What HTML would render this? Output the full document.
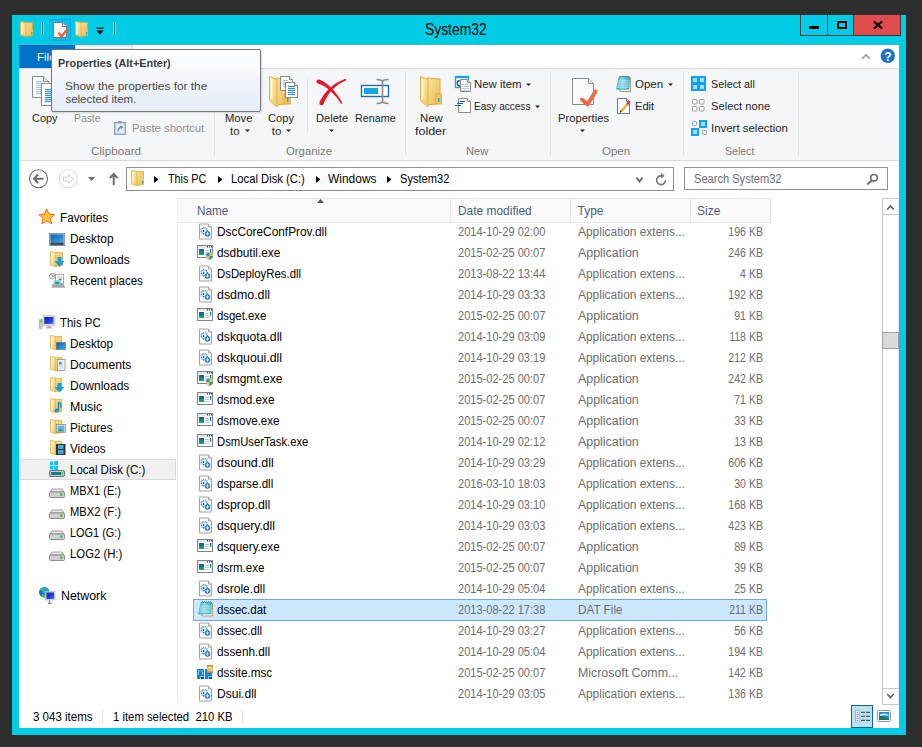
<!DOCTYPE html>
<html><head><meta charset="utf-8"><style>
html,body{margin:0;padding:0;width:922px;height:747px;overflow:hidden;background:#2e2e2e;font-family:"Liberation Sans", sans-serif;}
#root>div,#root>svg{position:absolute;}
.t{white-space:pre;}
</style></head><body><div id="root" style="position:relative;width:922px;height:747px;">
<div style="left:12px;top:15px;width:894px;height:720px;background:#01cce6;"></div>
<div style="left:19px;top:44px;width:880px;height:684px;background:#fff;"></div>
<div style="left:19px;top:44px;width:880px;height:1px;background:#4fb3c6;"></div>
<div style="left:800px;top:15px;width:101px;height:21px;background:#3a3a3a;"></div>
<div style="left:801px;top:15px;width:26px;height:20px;background:#01cce6;"></div>
<div style="left:828px;top:15px;width:25px;height:20px;background:#01cce6;"></div>
<div style="left:854px;top:15px;width:46px;height:20px;background:#e04b4b;"></div>
<div style="left:809px;top:26px;width:10px;height:3px;background:#000;"></div>
<div style="left:837px;top:21px;width:10px;height:8px;border:2px solid #000;box-sizing:border-box;"></div>
<svg style="left:873px;top:21px" width="10" height="8" viewBox="0 0 10 8"><path d="M1 0.5 L9 7.5 M9 0.5 L1 7.5" stroke="#000" stroke-width="2.2"/></svg>
<div class="t" style="left:424.6px;top:22.13px;font-size:15.8px;line-height:15.8px;color:#000;font-weight:400;transform-origin:left center;transform:scaleX(0.877);">System32</div>
<div style="left:19px;top:45px;width:56px;height:23px;background:#0072c6;"></div>
<div class="t" style="left:37px;top:52.27px;font-size:11.5px;line-height:11.5px;color:#fff;font-weight:400;transform-origin:left center;">File</div>
<div style="left:75px;top:45px;width:58px;height:24px;background:#f3f3f3;border:1px solid #dadbdc;border-bottom:none;box-sizing:border-box;"></div>
<div style="left:19px;top:68px;width:880px;height:1px;background:#dadbdc;"></div>
<div style="left:19px;top:69px;width:880px;height:91px;background:#f5f6f7;"></div>
<div style="left:19px;top:160px;width:880px;height:1px;background:#dadbdc;"></div>
<div style="left:214px;top:71px;width:1px;height:85px;background:#e2e3e4;"></div>
<div style="left:405px;top:71px;width:1px;height:85px;background:#e2e3e4;"></div>
<div style="left:550px;top:71px;width:1px;height:85px;background:#e2e3e4;"></div>
<div style="left:683px;top:71px;width:1px;height:85px;background:#e2e3e4;"></div>
<div style="left:798px;top:71px;width:1px;height:85px;background:#e2e3e4;"></div>
<div style="left:307px;top:78px;width:1px;height:55px;background:#e2e3e4;"></div>
<div class="t" style="left:32.4px;top:113.27px;font-size:11.5px;line-height:11.5px;color:#1e1e1e;font-weight:400;transform-origin:left center;transform:scaleX(0.953);">Copy</div>
<div class="t" style="left:74.2px;top:113.27px;font-size:11.5px;line-height:11.5px;color:#8d8d8d;font-weight:400;transform-origin:left center;transform:scaleX(0.901);">Paste</div>
<div class="t" style="left:131.5px;top:123.27px;font-size:11.5px;line-height:11.5px;color:#8d8d8d;font-weight:400;transform-origin:left center;transform:scaleX(0.982);">Paste shortcut</div>
<div class="t" style="left:91.4px;top:145.77px;font-size:11.5px;line-height:11.5px;color:#7a7a7a;font-weight:400;transform-origin:left center;transform:scaleX(1.018);">Clipboard</div>
<div class="t" style="left:225.2px;top:113.27px;font-size:11.5px;line-height:11.5px;color:#1e1e1e;font-weight:400;transform-origin:left center;transform:scaleX(0.978);">Move</div>
<div class="t" style="left:230px;top:126.27px;font-size:11.5px;line-height:11.5px;color:#1e1e1e;font-weight:400;transform-origin:left center;">to</div>
<div class="t" style="left:268.1px;top:113.27px;font-size:11.5px;line-height:11.5px;color:#1e1e1e;font-weight:400;transform-origin:left center;transform:scaleX(0.972);">Copy</div>
<div class="t" style="left:271.8px;top:126.27px;font-size:11.5px;line-height:11.5px;color:#1e1e1e;font-weight:400;transform-origin:left center;">to</div>
<div class="t" style="left:315.6px;top:113.27px;font-size:11.5px;line-height:11.5px;color:#1e1e1e;font-weight:400;transform-origin:left center;transform:scaleX(0.965);">Delete</div>
<div class="t" style="left:355.3px;top:113.27px;font-size:11.5px;line-height:11.5px;color:#1e1e1e;font-weight:400;transform-origin:left center;transform:scaleX(0.934);">Rename</div>
<div class="t" style="left:285.5px;top:145.77px;font-size:11.5px;line-height:11.5px;color:#7a7a7a;font-weight:400;transform-origin:left center;transform:scaleX(0.986);">Organize</div>
<div class="t" style="left:419.5px;top:113.27px;font-size:11.5px;line-height:11.5px;color:#1e1e1e;font-weight:400;transform-origin:left center;transform:scaleX(0.991);">New</div>
<div class="t" style="left:414.8px;top:126.27px;font-size:11.5px;line-height:11.5px;color:#1e1e1e;font-weight:400;transform-origin:left center;transform:scaleX(1.084);">folder</div>
<div class="t" style="left:474.4px;top:79.27px;font-size:11.5px;line-height:11.5px;color:#1e1e1e;font-weight:400;transform-origin:left center;transform:scaleX(0.991);">New item</div>
<div class="t" style="left:474.4px;top:101.27px;font-size:11.5px;line-height:11.5px;color:#1e1e1e;font-weight:400;transform-origin:left center;transform:scaleX(0.874);">Easy access</div>
<div class="t" style="left:465.5px;top:145.77px;font-size:11.5px;line-height:11.5px;color:#7a7a7a;font-weight:400;transform-origin:left center;transform:scaleX(0.973);">New</div>
<div class="t" style="left:557.6px;top:113.27px;font-size:11.5px;line-height:11.5px;color:#1e1e1e;font-weight:400;transform-origin:left center;transform:scaleX(0.973);">Properties</div>
<div class="t" style="left:634.6px;top:79.27px;font-size:11.5px;line-height:11.5px;color:#1e1e1e;font-weight:400;transform-origin:left center;transform:scaleX(1.002);">Open</div>
<div class="t" style="left:634.6px;top:101.27px;font-size:11.5px;line-height:11.5px;color:#1e1e1e;font-weight:400;transform-origin:left center;transform:scaleX(0.963);">Edit</div>
<div class="t" style="left:601.6px;top:145.77px;font-size:11.5px;line-height:11.5px;color:#7a7a7a;font-weight:400;transform-origin:left center;transform:scaleX(1.002);">Open</div>
<div class="t" style="left:710.5px;top:79.27px;font-size:11.5px;line-height:11.5px;color:#1e1e1e;font-weight:400;transform-origin:left center;transform:scaleX(0.941);">Select all</div>
<div class="t" style="left:710.5px;top:101.27px;font-size:11.5px;line-height:11.5px;color:#1e1e1e;font-weight:400;transform-origin:left center;transform:scaleX(0.973);">Select none</div>
<div class="t" style="left:710.5px;top:123.27px;font-size:11.5px;line-height:11.5px;color:#1e1e1e;font-weight:400;transform-origin:left center;transform:scaleX(0.994);">Invert selection</div>
<div class="t" style="left:725.1px;top:145.77px;font-size:11.5px;line-height:11.5px;color:#7a7a7a;font-weight:400;transform-origin:left center;transform:scaleX(0.917);">Select</div>
<div style="left:126px;top:167px;width:548px;height:24px;border:1px solid #8e8f8f;box-sizing:border-box;background:#fff;"></div>
<div class="t" style="left:168px;top:172.84px;font-size:12px;line-height:12px;color:#000;font-weight:400;transform-origin:left center;transform:scaleX(0.897);">This PC</div>
<div class="t" style="left:230.5px;top:172.84px;font-size:12px;line-height:12px;color:#000;font-weight:400;transform-origin:left center;transform:scaleX(0.938);">Local Disk (C:)</div>
<div class="t" style="left:328.3px;top:172.84px;font-size:12px;line-height:12px;color:#000;font-weight:400;transform-origin:left center;transform:scaleX(0.996);">Windows</div>
<div class="t" style="left:400.2px;top:172.84px;font-size:12px;line-height:12px;color:#000;font-weight:400;transform-origin:left center;transform:scaleX(0.926);">System32</div>
<div style="left:684px;top:167px;width:204px;height:23px;border:1px solid #8e8f8f;box-sizing:border-box;background:#fff;"></div>
<div class="t" style="left:694.2px;top:172.84px;font-size:12px;line-height:12px;color:#6d6d6d;font-weight:400;transform-origin:left center;transform:scaleX(0.924);">Search System32</div>
<div style="left:177px;top:197px;width:1px;height:507px;background:#f0f0f0;"></div>
<div style="left:20px;top:459px;width:156px;height:21px;background:#f0f0f0;border:1px solid #dadada;box-sizing:border-box;"></div>
<div class="t" style="left:60.2px;top:211.84px;font-size:12px;line-height:12px;color:#000;font-weight:400;transform-origin:left center;transform:scaleX(0.977);">Favorites</div>
<div class="t" style="left:70.4px;top:232.84px;font-size:12px;line-height:12px;color:#000;font-weight:400;transform-origin:left center;transform:scaleX(0.988);">Desktop</div>
<div class="t" style="left:70.4px;top:253.84px;font-size:12px;line-height:12px;color:#000;font-weight:400;transform-origin:left center;transform:scaleX(1.007);">Downloads</div>
<div class="t" style="left:70.4px;top:274.84px;font-size:12px;line-height:12px;color:#000;font-weight:400;transform-origin:left center;transform:scaleX(0.957);">Recent places</div>
<div class="t" style="left:60.2px;top:316.84px;font-size:12px;line-height:12px;color:#000;font-weight:400;transform-origin:left center;transform:scaleX(0.953);">This PC</div>
<div class="t" style="left:70.4px;top:337.84px;font-size:12px;line-height:12px;color:#000;font-weight:400;transform-origin:left center;transform:scaleX(0.979);">Desktop</div>
<div class="t" style="left:70.4px;top:358.84px;font-size:12px;line-height:12px;color:#000;font-weight:400;transform-origin:left center;transform:scaleX(1.011);">Documents</div>
<div class="t" style="left:70.4px;top:379.84px;font-size:12px;line-height:12px;color:#000;font-weight:400;transform-origin:left center;transform:scaleX(0.999);">Downloads</div>
<div class="t" style="left:70.4px;top:400.84px;font-size:12px;line-height:12px;color:#000;font-weight:400;transform-origin:left center;transform:scaleX(1.027);">Music</div>
<div class="t" style="left:70.4px;top:421.84px;font-size:12px;line-height:12px;color:#000;font-weight:400;transform-origin:left center;transform:scaleX(0.982);">Pictures</div>
<div class="t" style="left:70.4px;top:442.84px;font-size:12px;line-height:12px;color:#000;font-weight:400;transform-origin:left center;transform:scaleX(0.976);">Videos</div>
<div class="t" style="left:70.4px;top:463.84px;font-size:12px;line-height:12px;color:#000;font-weight:400;transform-origin:left center;transform:scaleX(0.956);">Local Disk (C:)</div>
<div class="t" style="left:70.4px;top:484.84px;font-size:12px;line-height:12px;color:#000;font-weight:400;transform-origin:left center;transform:scaleX(0.922);">MBX1 (E:)</div>
<div class="t" style="left:70.4px;top:505.84px;font-size:12px;line-height:12px;color:#000;font-weight:400;transform-origin:left center;transform:scaleX(0.933);">MBX2 (F:)</div>
<div class="t" style="left:70.4px;top:526.84px;font-size:12px;line-height:12px;color:#000;font-weight:400;transform-origin:left center;transform:scaleX(0.910);">LOG1 (G:)</div>
<div class="t" style="left:70.4px;top:547.84px;font-size:12px;line-height:12px;color:#000;font-weight:400;transform-origin:left center;transform:scaleX(0.945);">LOG2 (H:)</div>
<div class="t" style="left:60.6px;top:589.84px;font-size:12px;line-height:12px;color:#000;font-weight:400;transform-origin:left center;transform:scaleX(1.031);">Network</div>
<div style="left:178px;top:198px;width:593px;height:25px;background:#fafafa;border-top:1px solid #e5e5e5;border-bottom:1px solid #e5e5e5;box-sizing:border-box;"></div>
<div style="left:450px;top:198px;width:1px;height:25px;background:#e5e5e5;"></div>
<div style="left:570px;top:198px;width:1px;height:25px;background:#e5e5e5;"></div>
<div style="left:690px;top:198px;width:1px;height:25px;background:#e5e5e5;"></div>
<div style="left:770px;top:198px;width:1px;height:25px;background:#e5e5e5;"></div>
<div class="t" style="left:196.7px;top:204.84px;font-size:12px;line-height:12px;color:#4c607a;font-weight:400;transform-origin:left center;transform:scaleX(0.975);">Name</div>
<div class="t" style="left:457.8px;top:204.84px;font-size:12px;line-height:12px;color:#4c607a;font-weight:400;transform-origin:left center;transform:scaleX(0.995);">Date modified</div>
<div class="t" style="left:577.5px;top:204.84px;font-size:12px;line-height:12px;color:#4c607a;font-weight:400;transform-origin:left center;">Type</div>
<div class="t" style="left:697px;top:204.84px;font-size:12px;line-height:12px;color:#4c607a;font-weight:400;transform-origin:left center;">Size</div>
<svg style="left:316px;top:198px" width="9" height="6" viewBox="0 0 9 6"><path d="M1 5 L4.5 1 L8 5 Z" fill="#3a5674"/></svg>
<div class="t" style="left:217.4px;top:226.34px;font-size:12px;line-height:12px;color:#000;font-weight:400;transform-origin:left center;transform:scaleX(0.988);">DscCoreConfProv.dll</div>
<div class="t" style="left:457.8px;top:226.34px;font-size:12px;line-height:12px;color:#6d6d6d;font-weight:400;transform-origin:left center;transform:scaleX(0.922);">2014-10-29 02:00</div>
<div class="t" style="left:577.5px;top:226.34px;font-size:12px;line-height:12px;color:#6d6d6d;font-weight:400;transform-origin:left center;transform:scaleX(0.995);">Application extens...</div>
<div class="t" style="left:462.6px;width:300px;text-align:right;top:226.34px;font-size:12px;line-height:12px;color:#6d6d6d;font-weight:400;transform-origin:right center;transform:scaleX(0.880);">196 KB</div>
<div class="t" style="left:217.4px;top:247.34px;font-size:12px;line-height:12px;color:#000;font-weight:400;transform-origin:left center;transform:scaleX(0.990);">dsdbutil.exe</div>
<div class="t" style="left:457.8px;top:247.34px;font-size:12px;line-height:12px;color:#6d6d6d;font-weight:400;transform-origin:left center;transform:scaleX(0.922);">2015-02-25 00:07</div>
<div class="t" style="left:577.5px;top:247.34px;font-size:12px;line-height:12px;color:#6d6d6d;font-weight:400;transform-origin:left center;transform:scaleX(1.035);">Application</div>
<div class="t" style="left:462.6px;width:300px;text-align:right;top:247.34px;font-size:12px;line-height:12px;color:#6d6d6d;font-weight:400;transform-origin:right center;transform:scaleX(0.880);">246 KB</div>
<div class="t" style="left:217.4px;top:268.34px;font-size:12px;line-height:12px;color:#000;font-weight:400;transform-origin:left center;transform:scaleX(0.947);">DsDeployRes.dll</div>
<div class="t" style="left:457.8px;top:268.34px;font-size:12px;line-height:12px;color:#6d6d6d;font-weight:400;transform-origin:left center;transform:scaleX(0.922);">2013-08-22 13:44</div>
<div class="t" style="left:577.5px;top:268.34px;font-size:12px;line-height:12px;color:#6d6d6d;font-weight:400;transform-origin:left center;transform:scaleX(0.995);">Application extens...</div>
<div class="t" style="left:462.6px;width:300px;text-align:right;top:268.34px;font-size:12px;line-height:12px;color:#6d6d6d;font-weight:400;transform-origin:right center;transform:scaleX(0.880);">4 KB</div>
<div class="t" style="left:217.4px;top:289.34px;font-size:12px;line-height:12px;color:#000;font-weight:400;transform-origin:left center;transform:scaleX(1.032);">dsdmo.dll</div>
<div class="t" style="left:457.8px;top:289.34px;font-size:12px;line-height:12px;color:#6d6d6d;font-weight:400;transform-origin:left center;transform:scaleX(0.922);">2014-10-29 03:33</div>
<div class="t" style="left:577.5px;top:289.34px;font-size:12px;line-height:12px;color:#6d6d6d;font-weight:400;transform-origin:left center;transform:scaleX(0.995);">Application extens...</div>
<div class="t" style="left:462.6px;width:300px;text-align:right;top:289.34px;font-size:12px;line-height:12px;color:#6d6d6d;font-weight:400;transform-origin:right center;transform:scaleX(0.880);">192 KB</div>
<div class="t" style="left:217.4px;top:310.34px;font-size:12px;line-height:12px;color:#000;font-weight:400;transform-origin:left center;transform:scaleX(0.949);">dsget.exe</div>
<div class="t" style="left:457.8px;top:310.34px;font-size:12px;line-height:12px;color:#6d6d6d;font-weight:400;transform-origin:left center;transform:scaleX(0.922);">2015-02-25 00:07</div>
<div class="t" style="left:577.5px;top:310.34px;font-size:12px;line-height:12px;color:#6d6d6d;font-weight:400;transform-origin:left center;transform:scaleX(1.035);">Application</div>
<div class="t" style="left:462.6px;width:300px;text-align:right;top:310.34px;font-size:12px;line-height:12px;color:#6d6d6d;font-weight:400;transform-origin:right center;transform:scaleX(0.880);">91 KB</div>
<div class="t" style="left:217.4px;top:331.34px;font-size:12px;line-height:12px;color:#000;font-weight:400;transform-origin:left center;transform:scaleX(1.016);">dskquota.dll</div>
<div class="t" style="left:457.8px;top:331.34px;font-size:12px;line-height:12px;color:#6d6d6d;font-weight:400;transform-origin:left center;transform:scaleX(0.922);">2014-10-29 03:09</div>
<div class="t" style="left:577.5px;top:331.34px;font-size:12px;line-height:12px;color:#6d6d6d;font-weight:400;transform-origin:left center;transform:scaleX(0.995);">Application extens...</div>
<div class="t" style="left:462.6px;width:300px;text-align:right;top:331.34px;font-size:12px;line-height:12px;color:#6d6d6d;font-weight:400;transform-origin:right center;transform:scaleX(0.880);">118 KB</div>
<div class="t" style="left:217.4px;top:352.34px;font-size:12px;line-height:12px;color:#000;font-weight:400;transform-origin:left center;transform:scaleX(1.027);">dskquoui.dll</div>
<div class="t" style="left:457.8px;top:352.34px;font-size:12px;line-height:12px;color:#6d6d6d;font-weight:400;transform-origin:left center;transform:scaleX(0.922);">2014-10-29 03:19</div>
<div class="t" style="left:577.5px;top:352.34px;font-size:12px;line-height:12px;color:#6d6d6d;font-weight:400;transform-origin:left center;transform:scaleX(0.995);">Application extens...</div>
<div class="t" style="left:462.6px;width:300px;text-align:right;top:352.34px;font-size:12px;line-height:12px;color:#6d6d6d;font-weight:400;transform-origin:right center;transform:scaleX(0.880);">212 KB</div>
<div class="t" style="left:217.4px;top:373.34px;font-size:12px;line-height:12px;color:#000;font-weight:400;transform-origin:left center;transform:scaleX(1.001);">dsmgmt.exe</div>
<div class="t" style="left:457.8px;top:373.34px;font-size:12px;line-height:12px;color:#6d6d6d;font-weight:400;transform-origin:left center;transform:scaleX(0.922);">2015-02-25 00:07</div>
<div class="t" style="left:577.5px;top:373.34px;font-size:12px;line-height:12px;color:#6d6d6d;font-weight:400;transform-origin:left center;transform:scaleX(1.035);">Application</div>
<div class="t" style="left:462.6px;width:300px;text-align:right;top:373.34px;font-size:12px;line-height:12px;color:#6d6d6d;font-weight:400;transform-origin:right center;transform:scaleX(0.880);">242 KB</div>
<div class="t" style="left:217.4px;top:394.34px;font-size:12px;line-height:12px;color:#000;font-weight:400;transform-origin:left center;transform:scaleX(0.980);">dsmod.exe</div>
<div class="t" style="left:457.8px;top:394.34px;font-size:12px;line-height:12px;color:#6d6d6d;font-weight:400;transform-origin:left center;transform:scaleX(0.922);">2015-02-25 00:07</div>
<div class="t" style="left:577.5px;top:394.34px;font-size:12px;line-height:12px;color:#6d6d6d;font-weight:400;transform-origin:left center;transform:scaleX(1.035);">Application</div>
<div class="t" style="left:462.6px;width:300px;text-align:right;top:394.34px;font-size:12px;line-height:12px;color:#6d6d6d;font-weight:400;transform-origin:right center;transform:scaleX(0.880);">71 KB</div>
<div class="t" style="left:217.4px;top:415.34px;font-size:12px;line-height:12px;color:#000;font-weight:400;transform-origin:left center;transform:scaleX(0.967);">dsmove.exe</div>
<div class="t" style="left:457.8px;top:415.34px;font-size:12px;line-height:12px;color:#6d6d6d;font-weight:400;transform-origin:left center;transform:scaleX(0.922);">2015-02-25 00:07</div>
<div class="t" style="left:577.5px;top:415.34px;font-size:12px;line-height:12px;color:#6d6d6d;font-weight:400;transform-origin:left center;transform:scaleX(1.035);">Application</div>
<div class="t" style="left:462.6px;width:300px;text-align:right;top:415.34px;font-size:12px;line-height:12px;color:#6d6d6d;font-weight:400;transform-origin:right center;transform:scaleX(0.880);">33 KB</div>
<div class="t" style="left:217.4px;top:436.34px;font-size:12px;line-height:12px;color:#000;font-weight:400;transform-origin:left center;transform:scaleX(0.938);">DsmUserTask.exe</div>
<div class="t" style="left:457.8px;top:436.34px;font-size:12px;line-height:12px;color:#6d6d6d;font-weight:400;transform-origin:left center;transform:scaleX(0.922);">2014-10-29 02:12</div>
<div class="t" style="left:577.5px;top:436.34px;font-size:12px;line-height:12px;color:#6d6d6d;font-weight:400;transform-origin:left center;transform:scaleX(1.035);">Application</div>
<div class="t" style="left:462.6px;width:300px;text-align:right;top:436.34px;font-size:12px;line-height:12px;color:#6d6d6d;font-weight:400;transform-origin:right center;transform:scaleX(0.880);">13 KB</div>
<div class="t" style="left:217.4px;top:457.34px;font-size:12px;line-height:12px;color:#000;font-weight:400;transform-origin:left center;transform:scaleX(1.036);">dsound.dll</div>
<div class="t" style="left:457.8px;top:457.34px;font-size:12px;line-height:12px;color:#6d6d6d;font-weight:400;transform-origin:left center;transform:scaleX(0.922);">2014-10-29 03:29</div>
<div class="t" style="left:577.5px;top:457.34px;font-size:12px;line-height:12px;color:#6d6d6d;font-weight:400;transform-origin:left center;transform:scaleX(0.995);">Application extens...</div>
<div class="t" style="left:462.6px;width:300px;text-align:right;top:457.34px;font-size:12px;line-height:12px;color:#6d6d6d;font-weight:400;transform-origin:right center;transform:scaleX(0.880);">606 KB</div>
<div class="t" style="left:217.4px;top:478.34px;font-size:12px;line-height:12px;color:#000;font-weight:400;transform-origin:left center;transform:scaleX(0.970);">dsparse.dll</div>
<div class="t" style="left:457.8px;top:478.34px;font-size:12px;line-height:12px;color:#6d6d6d;font-weight:400;transform-origin:left center;transform:scaleX(0.922);">2016-03-10 18:03</div>
<div class="t" style="left:577.5px;top:478.34px;font-size:12px;line-height:12px;color:#6d6d6d;font-weight:400;transform-origin:left center;transform:scaleX(0.995);">Application extens...</div>
<div class="t" style="left:462.6px;width:300px;text-align:right;top:478.34px;font-size:12px;line-height:12px;color:#6d6d6d;font-weight:400;transform-origin:right center;transform:scaleX(0.880);">30 KB</div>
<div class="t" style="left:217.4px;top:499.34px;font-size:12px;line-height:12px;color:#000;font-weight:400;transform-origin:left center;transform:scaleX(1.024);">dsprop.dll</div>
<div class="t" style="left:457.8px;top:499.34px;font-size:12px;line-height:12px;color:#6d6d6d;font-weight:400;transform-origin:left center;transform:scaleX(0.922);">2014-10-29 03:10</div>
<div class="t" style="left:577.5px;top:499.34px;font-size:12px;line-height:12px;color:#6d6d6d;font-weight:400;transform-origin:left center;transform:scaleX(0.995);">Application extens...</div>
<div class="t" style="left:462.6px;width:300px;text-align:right;top:499.34px;font-size:12px;line-height:12px;color:#6d6d6d;font-weight:400;transform-origin:right center;transform:scaleX(0.880);">168 KB</div>
<div class="t" style="left:217.4px;top:520.34px;font-size:12px;line-height:12px;color:#000;font-weight:400;transform-origin:left center;transform:scaleX(1.015);">dsquery.dll</div>
<div class="t" style="left:457.8px;top:520.34px;font-size:12px;line-height:12px;color:#6d6d6d;font-weight:400;transform-origin:left center;transform:scaleX(0.922);">2014-10-29 03:03</div>
<div class="t" style="left:577.5px;top:520.34px;font-size:12px;line-height:12px;color:#6d6d6d;font-weight:400;transform-origin:left center;transform:scaleX(0.995);">Application extens...</div>
<div class="t" style="left:462.6px;width:300px;text-align:right;top:520.34px;font-size:12px;line-height:12px;color:#6d6d6d;font-weight:400;transform-origin:right center;transform:scaleX(0.880);">423 KB</div>
<div class="t" style="left:217.4px;top:541.34px;font-size:12px;line-height:12px;color:#000;font-weight:400;transform-origin:left center;transform:scaleX(0.971);">dsquery.exe</div>
<div class="t" style="left:457.8px;top:541.34px;font-size:12px;line-height:12px;color:#6d6d6d;font-weight:400;transform-origin:left center;transform:scaleX(0.922);">2015-02-25 00:07</div>
<div class="t" style="left:577.5px;top:541.34px;font-size:12px;line-height:12px;color:#6d6d6d;font-weight:400;transform-origin:left center;transform:scaleX(1.035);">Application</div>
<div class="t" style="left:462.6px;width:300px;text-align:right;top:541.34px;font-size:12px;line-height:12px;color:#6d6d6d;font-weight:400;transform-origin:right center;transform:scaleX(0.880);">89 KB</div>
<div class="t" style="left:217.4px;top:562.34px;font-size:12px;line-height:12px;color:#000;font-weight:400;transform-origin:left center;transform:scaleX(0.960);">dsrm.exe</div>
<div class="t" style="left:457.8px;top:562.34px;font-size:12px;line-height:12px;color:#6d6d6d;font-weight:400;transform-origin:left center;transform:scaleX(0.922);">2015-02-25 00:07</div>
<div class="t" style="left:577.5px;top:562.34px;font-size:12px;line-height:12px;color:#6d6d6d;font-weight:400;transform-origin:left center;transform:scaleX(1.035);">Application</div>
<div class="t" style="left:462.6px;width:300px;text-align:right;top:562.34px;font-size:12px;line-height:12px;color:#6d6d6d;font-weight:400;transform-origin:right center;transform:scaleX(0.880);">39 KB</div>
<div class="t" style="left:217.4px;top:583.34px;font-size:12px;line-height:12px;color:#000;font-weight:400;transform-origin:left center;transform:scaleX(1.004);">dsrole.dll</div>
<div class="t" style="left:457.8px;top:583.34px;font-size:12px;line-height:12px;color:#6d6d6d;font-weight:400;transform-origin:left center;transform:scaleX(0.922);">2014-10-29 05:04</div>
<div class="t" style="left:577.5px;top:583.34px;font-size:12px;line-height:12px;color:#6d6d6d;font-weight:400;transform-origin:left center;transform:scaleX(0.995);">Application extens...</div>
<div class="t" style="left:462.6px;width:300px;text-align:right;top:583.34px;font-size:12px;line-height:12px;color:#6d6d6d;font-weight:400;transform-origin:right center;transform:scaleX(0.880);">25 KB</div>
<div style="left:193px;top:599px;width:574px;height:22px;background:#cce8ff;border:1px solid #72a9dc;box-sizing:border-box;"></div>
<div class="t" style="left:217.4px;top:604.34px;font-size:12px;line-height:12px;color:#000;font-weight:400;transform-origin:left center;transform:scaleX(0.960);">dssec.dat</div>
<div class="t" style="left:457.8px;top:604.34px;font-size:12px;line-height:12px;color:#6d6d6d;font-weight:400;transform-origin:left center;transform:scaleX(0.922);">2013-08-22 17:38</div>
<div class="t" style="left:577.5px;top:604.34px;font-size:12px;line-height:12px;color:#6d6d6d;font-weight:400;transform-origin:left center;transform:scaleX(0.977);">DAT File</div>
<div class="t" style="left:462.6px;width:300px;text-align:right;top:604.34px;font-size:12px;line-height:12px;color:#6d6d6d;font-weight:400;transform-origin:right center;transform:scaleX(0.880);">211 KB</div>
<div class="t" style="left:217.4px;top:625.34px;font-size:12px;line-height:12px;color:#000;font-weight:400;transform-origin:left center;transform:scaleX(0.966);">dssec.dll</div>
<div class="t" style="left:457.8px;top:625.34px;font-size:12px;line-height:12px;color:#6d6d6d;font-weight:400;transform-origin:left center;transform:scaleX(0.922);">2014-10-29 03:27</div>
<div class="t" style="left:577.5px;top:625.34px;font-size:12px;line-height:12px;color:#6d6d6d;font-weight:400;transform-origin:left center;transform:scaleX(0.995);">Application extens...</div>
<div class="t" style="left:462.6px;width:300px;text-align:right;top:625.34px;font-size:12px;line-height:12px;color:#6d6d6d;font-weight:400;transform-origin:right center;transform:scaleX(0.880);">56 KB</div>
<div class="t" style="left:217.4px;top:646.34px;font-size:12px;line-height:12px;color:#000;font-weight:400;transform-origin:left center;transform:scaleX(0.982);">dssenh.dll</div>
<div class="t" style="left:457.8px;top:646.34px;font-size:12px;line-height:12px;color:#6d6d6d;font-weight:400;transform-origin:left center;transform:scaleX(0.922);">2014-10-29 05:04</div>
<div class="t" style="left:577.5px;top:646.34px;font-size:12px;line-height:12px;color:#6d6d6d;font-weight:400;transform-origin:left center;transform:scaleX(0.995);">Application extens...</div>
<div class="t" style="left:462.6px;width:300px;text-align:right;top:646.34px;font-size:12px;line-height:12px;color:#6d6d6d;font-weight:400;transform-origin:right center;transform:scaleX(0.880);">194 KB</div>
<div class="t" style="left:217.4px;top:667.34px;font-size:12px;line-height:12px;color:#000;font-weight:400;transform-origin:left center;transform:scaleX(0.974);">dssite.msc</div>
<div class="t" style="left:457.8px;top:667.34px;font-size:12px;line-height:12px;color:#6d6d6d;font-weight:400;transform-origin:left center;transform:scaleX(0.922);">2015-02-25 00:07</div>
<div class="t" style="left:577.5px;top:667.34px;font-size:12px;line-height:12px;color:#6d6d6d;font-weight:400;transform-origin:left center;transform:scaleX(1.030);">Microsoft Comm...</div>
<div class="t" style="left:462.6px;width:300px;text-align:right;top:667.34px;font-size:12px;line-height:12px;color:#6d6d6d;font-weight:400;transform-origin:right center;transform:scaleX(0.880);">142 KB</div>
<div class="t" style="left:217.4px;top:688.34px;font-size:12px;line-height:12px;color:#000;font-weight:400;transform-origin:left center;transform:scaleX(1.004);">Dsui.dll</div>
<div class="t" style="left:457.8px;top:688.34px;font-size:12px;line-height:12px;color:#6d6d6d;font-weight:400;transform-origin:left center;transform:scaleX(0.922);">2014-10-29 03:05</div>
<div class="t" style="left:577.5px;top:688.34px;font-size:12px;line-height:12px;color:#6d6d6d;font-weight:400;transform-origin:left center;transform:scaleX(0.995);">Application extens...</div>
<div class="t" style="left:462.6px;width:300px;text-align:right;top:688.34px;font-size:12px;line-height:12px;color:#6d6d6d;font-weight:400;transform-origin:right center;transform:scaleX(0.880);">136 KB</div>
<div style="left:882px;top:198px;width:17px;height:507px;border:1px solid #c8c8c8;border-right-color:#e8dcdc;box-sizing:border-box;background:#fff;"></div>
<div style="left:882px;top:214px;width:17px;height:1px;background:#c8c8c8;"></div>
<div style="left:882px;top:688px;width:17px;height:1px;background:#c8c8c8;"></div>
<div style="left:882px;top:332px;width:17px;height:17px;background:#dadada;border:1px solid #a0a0a0;box-sizing:border-box;"></div>
<div class="t" style="left:32.5px;top:711.34px;font-size:12px;line-height:12px;color:#000;font-weight:400;transform-origin:left center;transform:scaleX(0.961);">3 043 items</div>
<div style="left:102px;top:710px;width:1px;height:14px;background:#e2e2e2;"></div>
<div class="t" style="left:113.2px;top:711.34px;font-size:12px;line-height:12px;color:#000;font-weight:400;transform-origin:left center;transform:scaleX(0.943);">1 item selected  210 KB</div>
<div style="left:242px;top:710px;width:1px;height:14px;background:#e2e2e2;"></div>
<div style="left:851px;top:705px;width:22px;height:23px;background:#b9e3f5;border:1.3px solid #0f6592;box-sizing:border-box;"></div>
<svg style="left:0;top:0" width="922" height="747" viewBox="0 0 922 747"><defs>
<linearGradient id="fold" x1="0" y1="0" x2="1" y2="1"><stop offset="0" stop-color="#fff3c4"/><stop offset="1" stop-color="#f0c85a"/></linearGradient>
<linearGradient id="foldb" x1="0" y1="0" x2="1" y2="1"><stop offset="0" stop-color="#f9e3a0"/><stop offset="1" stop-color="#e9b94c"/></linearGradient>
<linearGradient id="pad" x1="0" y1="0" x2="1" y2="0"><stop offset="0" stop-color="#2fb9cf"/><stop offset="0.45" stop-color="#8ad8e4"/><stop offset="1" stop-color="#2aaec6"/></linearGradient>
<linearGradient id="scr" x1="0" y1="0" x2="1" y2="1"><stop offset="0" stop-color="#0e5fb8"/><stop offset="1" stop-color="#41a9ef"/></linearGradient>
<linearGradient id="exeg" x1="0" y1="0" x2="0" y2="1"><stop offset="0" stop-color="#1a4fa8"/><stop offset="1" stop-color="#0db070"/></linearGradient>
<linearGradient id="mscg" x1="0" y1="0" x2="0" y2="1"><stop offset="0" stop-color="#c8902a"/><stop offset="0.6" stop-color="#f4d27a"/><stop offset="1" stop-color="#b87a1a"/></linearGradient>
<linearGradient id="netg" x1="0" y1="0" x2="1" y2="1"><stop offset="0" stop-color="#0a1ab8"/><stop offset="0.7" stop-color="#2a4ae8"/><stop offset="1" stop-color="#6a8af8"/></linearGradient>
<linearGradient id="ttg" x1="0" y1="0" x2="0" y2="1"><stop offset="0" stop-color="#ffffff"/><stop offset="1" stop-color="#e4ecf7"/></linearGradient>
</defs><g transform="translate(20,21) scale(1.0)"><path d="M5 1.5 L12.5 1.5 L12.5 14.5 L5 15.5 Z" fill="url(#foldb)" stroke="#e0a83a" stroke-width="0.8"/><path d="M0.5 0.5 L6 1.5 L6 15.8 L0.5 14 Z" fill="url(#fold)" stroke="#e3ae44" stroke-width="0.8"/><path d="M2 2 L2 13" stroke="#fffbe8" stroke-width="1"/><rect x="10.5" y="8.5" width="2.5" height="6" fill="#f1c15a"/><rect x="11.2" y="11" width="1.2" height="2.6" fill="#1aa3d9"/></g><path d="M42.5 23 L42.5 35" stroke="#3b6f7a" stroke-width="1"/><path d="M41.5 23 L41.5 35 M43.5 23 L43.5 35" stroke="#6fdcf0" stroke-width="1"/><rect x="49.5" y="19.5" width="21" height="21" fill="#06c0ea" stroke="#1aa0e4" stroke-width="1"/><path d="M53.5 22.5 L62.5 22.5 L66.5 26.5 L66.5 37.5 L53.5 37.5 Z" fill="#fafafa" stroke="#7a7a7a" stroke-width="1"/><path d="M62.5 22.5 L62.5 26.5 L66.5 26.5" fill="#e8e8e8" stroke="#7a7a7a" stroke-width="1"/><path d="M59 33.5 L61.5 36.5 L67 29.5" fill="none" stroke="#f0603a" stroke-width="2.4" stroke-linecap="round" stroke-linejoin="round"/><g transform="translate(75,21) scale(1.0)"><path d="M5 1.5 L12.5 1.5 L12.5 14.5 L5 15.5 Z" fill="url(#foldb)" stroke="#e0a83a" stroke-width="0.8"/><path d="M0.5 0.5 L6 1.5 L6 15.8 L0.5 14 Z" fill="url(#fold)" stroke="#e3ae44" stroke-width="0.8"/><path d="M2 2 L2 13" stroke="#fffbe8" stroke-width="1"/><rect x="10.5" y="8.5" width="2.5" height="6" fill="#f1c15a"/><rect x="11.2" y="11" width="1.2" height="2.6" fill="#1aa3d9"/></g><rect x="96.5" y="27.5" width="7" height="1.2" fill="#000"/><path d="M96.5 30.5 L103.5 30.5 L100 34.5 Z" fill="#000"/><path d="M114.5 23 L114.5 35" stroke="#3b6f7a" stroke-width="1"/><path d="M113.5 23 L113.5 35 M115.5 23 L115.5 35" stroke="#6fdcf0" stroke-width="1"/><path d="M862 59 L866 55 L870 59" fill="none" stroke="#9a9a9a" stroke-width="1.6"/><circle cx="887.8" cy="55.8" r="7.2" fill="#1a72c4"/><text x="887.8" y="60.5" font-family="Liberation Sans" font-weight="700" font-size="12" fill="#fff" text-anchor="middle">?</text><path d="M32.5 76.5 L43.5 76.5 L48.5 81.5 L48.5 97.5 L32.5 97.5 Z" fill="#fff" stroke="#8a8a8a" stroke-width="1"/><path d="M43.5 76.5 L43.5 81.5 L48.5 81.5" fill="#e8e8e8" stroke="#8a8a8a" stroke-width="1"/><path d="M36 81.5 L44 81.5" stroke="#9cc4e4" stroke-width="1"/><path d="M36 83.5 L44 83.5" stroke="#9cc4e4" stroke-width="1"/><path d="M36 85.5 L44 85.5" stroke="#9cc4e4" stroke-width="1"/><path d="M36 87.5 L44 87.5" stroke="#9cc4e4" stroke-width="1"/><path d="M36 89.5 L44 89.5" stroke="#9cc4e4" stroke-width="1"/><path d="M36 91.5 L44 91.5" stroke="#9cc4e4" stroke-width="1"/><path d="M36 93.5 L44 93.5" stroke="#9cc4e4" stroke-width="1"/><path d="M41.5 83.5 L51.5 83.5 L56.5 88.5 L56.5 105.5 L41.5 105.5 Z" fill="#fff" stroke="#8a8a8a" stroke-width="1"/><path d="M51.5 83.5 L51.5 88.5 L56.5 88.5" fill="#e8e8e8" stroke="#8a8a8a" stroke-width="1"/><path d="M45 89.5 L55 89.5" stroke="#3a8fd0" stroke-width="1.2"/><path d="M45 91.5 L55 91.5" stroke="#3a8fd0" stroke-width="1.2"/><path d="M45 93.5 L55 93.5" stroke="#3a8fd0" stroke-width="1.2"/><path d="M45 95.5 L55 95.5" stroke="#3a8fd0" stroke-width="1.2"/><path d="M45 97.5 L55 97.5" stroke="#3a8fd0" stroke-width="1.2"/><path d="M45 99.5 L55 99.5" stroke="#3a8fd0" stroke-width="1.2"/><path d="M45 101.5 L55 101.5" stroke="#3a8fd0" stroke-width="1.2"/><rect x="114.7" y="122.7" width="10.6" height="11.6" fill="#e6eef6" stroke="#88a2bc" stroke-width="1.4"/><rect x="118" y="121" width="4" height="2" fill="#8aa4bc"/><path d="M118 131.5 Q118 127.5 122 127" fill="none" stroke="#6a8aaa" stroke-width="1.3"/><path d="M120 125.5 L123.3 126.5 L121.5 129.5 Z" fill="#6a8aaa"/><rect x="73" y="79" width="24" height="28" fill="#e2e2e2" stroke="#9a9a9a"/><g transform="translate(226,76)"><path d="M7 2 L20 3 L20 27.5 L7 29 Z" fill="url(#foldb)" stroke="#e3a73c" stroke-width="1"/><path d="M0.5 0.5 L8 3.5 L8 31 L0.5 24.5 Z" fill="url(#fold)" stroke="#e8ad40" stroke-width="1"/><path d="M2.5 3 L2.5 23" stroke="#fffdf0" stroke-width="1.5"/><rect x="15.5" y="18" width="6" height="10" fill="#f0c45c" stroke="#e0a83a" stroke-width="0.8"/><rect x="18" y="22" width="1.5" height="4" fill="#2aa5dc"/></g><g transform="translate(269,76)"><path d="M7 2 L20 3 L20 27.5 L7 29 Z" fill="url(#foldb)" stroke="#e3a73c" stroke-width="1"/><path d="M0.5 0.5 L8 3.5 L8 31 L0.5 24.5 Z" fill="url(#fold)" stroke="#e8ad40" stroke-width="1"/><path d="M2.5 3 L2.5 23" stroke="#fffdf0" stroke-width="1.5"/><rect x="15.5" y="18" width="6" height="10" fill="#f0c45c" stroke="#e0a83a" stroke-width="0.8"/><rect x="18" y="22" width="1.5" height="4" fill="#2aa5dc"/></g><path d="M280.5 76.5 L289.5 76.5 L292.5 79.5 L292.5 90.5 L280.5 90.5 Z" fill="#fff" stroke="#8a8a8a" stroke-width="1"/><path d="M289.5 76.5 L289.5 79.5 L292.5 79.5" fill="#e8e8e8" stroke="#8a8a8a" stroke-width="1"/><path d="M283 80.5 L288 80.5" stroke="#9cc4e4" stroke-width="1"/><path d="M283 82.5 L288 82.5" stroke="#9cc4e4" stroke-width="1"/><path d="M283 84.5 L288 84.5" stroke="#9cc4e4" stroke-width="1"/><path d="M283 86.5 L288 86.5" stroke="#9cc4e4" stroke-width="1"/><path d="M285.5 82.5 L294.5 82.5 L297.5 85.5 L297.5 97.5 L285.5 97.5 Z" fill="#fff" stroke="#8a8a8a" stroke-width="1"/><path d="M294.5 82.5 L294.5 85.5 L297.5 85.5" fill="#e8e8e8" stroke="#8a8a8a" stroke-width="1"/><path d="M288 86.5 L295 86.5" stroke="#3a8fd0" stroke-width="1.2"/><path d="M288 88.5 L295 88.5" stroke="#3a8fd0" stroke-width="1.2"/><path d="M288 90.5 L295 90.5" stroke="#3a8fd0" stroke-width="1.2"/><path d="M288 92.5 L295 92.5" stroke="#3a8fd0" stroke-width="1.2"/><path d="M288 94.5 L295 94.5" stroke="#3a8fd0" stroke-width="1.2"/><path d="M317.79 83.48 L318.77 83.79 L319.75 84.15 L320.73 84.56 L321.71 85.00 L322.69 85.49 L323.67 86.03 L324.65 86.61 L325.63 87.23 L326.60 87.90 L327.57 88.62 L328.54 89.38 L329.51 90.18 L330.47 91.04 L331.44 91.93 L332.39 92.88 L333.35 93.87 L334.30 94.90 L335.24 95.98 L336.18 97.11 L337.12 98.28 L338.05 99.50 L338.98 100.76 L339.90 102.07 L340.82 103.42 L342.18 102.58 L341.34 101.14 L340.49 99.75 L339.63 98.40 L338.77 97.08 L337.89 95.81 L337.01 94.58 L336.11 93.39 L335.21 92.25 L334.29 91.14 L333.37 90.07 L332.44 89.05 L331.49 88.07 L330.53 87.12 L329.57 86.22 L328.59 85.36 L327.60 84.54 L326.59 83.77 L325.58 83.03 L324.55 82.34 L323.51 81.69 L322.45 81.08 L321.39 80.52 L320.31 80.00 L319.21 79.52 Z" fill="#e5192c"/><circle cx="318.5" cy="81.5" r="2.1" fill="#e5192c"/><circle cx="341.5" cy="103" r="0.8" fill="#e5192c"/><path d="M345.22 79.05 L343.81 79.54 L342.44 80.07 L341.09 80.64 L339.76 81.25 L338.47 81.91 L337.20 82.60 L335.97 83.33 L334.76 84.11 L333.58 84.92 L332.42 85.78 L331.30 86.68 L330.21 87.62 L329.14 88.60 L328.11 89.63 L327.11 90.69 L326.14 91.80 L325.19 92.94 L324.28 94.13 L323.41 95.36 L322.56 96.63 L321.74 97.94 L320.96 99.29 L320.21 100.68 L319.49 102.11 L323.51 103.89 L324.07 102.52 L324.67 101.19 L325.29 99.90 L325.94 98.64 L326.63 97.41 L327.34 96.22 L328.09 95.06 L328.86 93.94 L329.67 92.85 L330.51 91.79 L331.39 90.77 L332.29 89.78 L333.23 88.82 L334.20 87.90 L335.21 87.01 L336.24 86.16 L337.32 85.34 L338.42 84.55 L339.56 83.80 L340.74 83.08 L341.95 82.39 L343.19 81.74 L344.47 81.13 L345.78 80.55 Z" fill="#e5192c"/><circle cx="345.5" cy="79.8" r="0.8" fill="#e5192c"/><circle cx="321.5" cy="103" r="2.2" fill="#e5192c"/><rect x="361.5" y="85.5" width="27" height="11" fill="#fff" stroke="#1b6db4" stroke-width="1.4"/><rect x="364" y="88" width="14" height="6" fill="#18a5e6"/><path d="M382.5 80 L382.5 103 M376.5 79.5 Q382.5 79.5 382.5 82 Q382.5 79.5 388.5 79.5 M376.5 103.5 Q382.5 103.5 382.5 101 Q382.5 103.5 388.5 103.5" fill="none" stroke="#8d8d8d" stroke-width="1.6"/><path d="M245 129.5 L250 129.5 L247.5 132 Z" fill="#222"/><path d="M286 129.5 L291 129.5 L288.5 132 Z" fill="#222"/><path d="M329 129.5 L334 129.5 L331.5 132 Z" fill="#222"/><path d="M580 129.5 L585 129.5 L582.5 132 Z" fill="#222"/><path d="M526 83.5 L531 83.5 L528.5 86 Z" fill="#222"/><path d="M535 105.5 L540 105.5 L537.5 108 Z" fill="#222"/><path d="M668 83.5 L673 83.5 L670.5 86 Z" fill="#222"/><g transform="translate(420,76)"><path d="M7 2 L20 3 L20 27.5 L7 29 Z" fill="url(#foldb)" stroke="#e3a73c" stroke-width="1"/><path d="M0.5 0.5 L8 3.5 L8 31 L0.5 24.5 Z" fill="url(#fold)" stroke="#e8ad40" stroke-width="1"/><path d="M2.5 3 L2.5 23" stroke="#fffdf0" stroke-width="1.5"/><rect x="15.5" y="18" width="6" height="10" fill="#f0c45c" stroke="#e0a83a" stroke-width="0.8"/><rect x="18" y="22" width="1.5" height="4" fill="#2aa5dc"/></g><rect x="455.5" y="76.5" width="13" height="11" fill="#fff" stroke="#16a6e0" stroke-width="1.3"/><rect x="455" y="76" width="14" height="2.2" fill="#16a6e0"/><path d="M460 80.5 Q457.2 80.5 457.3 83.3 Q457.5 86 460 85.8" fill="none" stroke="#1a6ab0" stroke-width="1.7"/><path d="M460.5 79.5 L467.5 79.5 L470.5 82.5 L470.5 91.5 L460.5 91.5 Z" fill="#fff" stroke="#8a8a8a" stroke-width="1"/><path d="M467.5 79.5 L467.5 82.5 L470.5 82.5" fill="#e8e8e8" stroke="#8a8a8a" stroke-width="1"/><path d="M461 84.5 L469 84.5" stroke="#b8cfe0" stroke-width="1"/><path d="M461 86.5 L469 86.5" stroke="#b8cfe0" stroke-width="1"/><path d="M461 88.5 L469 88.5" stroke="#b8cfe0" stroke-width="1"/><path d="M461 90.5 L469 90.5" stroke="#b8cfe0" stroke-width="1"/><path d="M458.5 98.5 L467.5 98.5 L470.5 101.5 L470.5 112.5 L458.5 112.5 Z" fill="#fff" stroke="#8a8a8a" stroke-width="1"/><path d="M467.5 98.5 L467.5 101.5 L470.5 101.5" fill="#e8e8e8" stroke="#8a8a8a" stroke-width="1"/><path d="M459.5 101.5 L465 101.5 M457 103.5 L463 103.5 M455 105.5 L461 105.5" stroke="#1560d8" stroke-width="1.2"/><path d="M572.5 78.5 L588.5 78.5 L593.5 83.5 L593.5 104.5 L572.5 104.5 Z" fill="#fafafa" stroke="#8a8a8a" stroke-width="1"/><path d="M588.5 78.5 L588.5 83.5 L593.5 83.5" fill="#e8e8e8" stroke="#8a8a8a" stroke-width="1"/><path d="M582 99.5 L587.5 104.5 L595.5 91.5" fill="none" stroke="#f36a45" stroke-width="4" stroke-linecap="round" stroke-linejoin="round"/><g transform="translate(616,76) scale(1.0,1.0666666666666667)"><path d="M4 2 L14.5 2 L14.5 14.5 L4 14.5 Z" fill="#fff" stroke="#b59a6a" stroke-width="1"/><path d="M3 1 L13.5 1 L13 12.5 L0.5 12.5 Z" fill="url(#pad)" stroke="#2aa7bd" stroke-width="0.6"/><path d="M2.5 4.5 L12.8 4.5 M2 6.5 L12.8 6.5 M1.6 8.5 L12.8 8.5 M1.2 10.5 L12.8 10.5" stroke="#d6f3f6" stroke-width="0.7"/><path d="M3.5 1 L4.5 0 L5.5 1 L6.5 0 L7.5 1 L8.5 0 L9.5 1 L10.5 0 L11.5 1 L12.5 0 L13.5 1" fill="none" stroke="#555" stroke-width="0.7"/></g><path d="M617.5 98.5 L626.5 98.5 L629.5 101.5 L629.5 113.5 L617.5 113.5 Z" fill="#fff" stroke="#7a7a7a" stroke-width="1"/><path d="M626.5 98.5 L626.5 101.5 L629.5 101.5" fill="#e8e8e8" stroke="#7a7a7a" stroke-width="1"/><path d="M621 111.5 L628 103.5" stroke="#e8b535" stroke-width="2.4"/><path d="M627 104.5 L629.5 101.5" stroke="#e0303c" stroke-width="2.4"/><path d="M620 112.5 L621.5 110.5" stroke="#333" stroke-width="1.2"/><rect x="691" y="76" width="15" height="15" fill="#0ea2f0"/><rect x="693" y="78" width="4" height="4" fill="#a6dcf8"/><rect x="700" y="78" width="4" height="4" fill="#a6dcf8"/><rect x="693" y="85" width="4" height="4" fill="#a6dcf8"/><rect x="700" y="85" width="4" height="4" fill="#a6dcf8"/><rect x="692.5" y="99.5" width="4.5" height="4.5" rx="0.8" fill="#fff" stroke="#9a9a9a" stroke-width="1"/><rect x="699.5" y="99.5" width="4.5" height="4.5" rx="0.8" fill="#fff" stroke="#9a9a9a" stroke-width="1"/><rect x="692.5" y="106.5" width="4.5" height="4.5" rx="0.8" fill="#fff" stroke="#9a9a9a" stroke-width="1"/><rect x="699.5" y="106.5" width="4.5" height="4.5" rx="0.8" fill="#fff" stroke="#9a9a9a" stroke-width="1"/><rect x="692.5" y="121.5" width="4" height="4" rx="0.8" fill="#fff" stroke="#9a9a9a"/><rect x="702.5" y="130.5" width="4" height="4" rx="0.8" fill="#fff" stroke="#9a9a9a"/><rect x="699" y="120" width="8" height="8" fill="#0ea2f0"/><rect x="701" y="122" width="4" height="4" fill="#a6dcf8"/><rect x="691" y="128" width="8" height="8" fill="#0ea2f0"/><rect x="693" y="130" width="4" height="4" fill="#a6dcf8"/><circle cx="38.5" cy="178.7" r="9" fill="none" stroke="#707070" stroke-width="1.1"/><path d="M34 178.7 L43.5 178.7 M38 174.5 L34 178.7 L38 183" fill="none" stroke="#6d6d6d" stroke-width="2"/><circle cx="68.3" cy="178.7" r="9" fill="none" stroke="#dadada" stroke-width="1.1"/><path d="M63.5 177 L68.5 177 L68.5 174.5 L73.5 179 L68.5 183.5 L68.5 181 L63.5 181 Z" fill="none" stroke="#d2d2d2" stroke-width="1"/><path d="M88 177 L95 177 L91.5 181 Z" fill="#6d6d6d"/><path d="M113.7 174 L113.7 185 M109.8 178 L113.7 174 L117.6 178" fill="none" stroke="#6d6d6d" stroke-width="2"/><g transform="translate(131,170) scale(1.0)"><path d="M5 1.5 L12.5 1.5 L12.5 14.5 L5 15.5 Z" fill="url(#foldb)" stroke="#e0a83a" stroke-width="0.8"/><path d="M0.5 0.5 L6 1.5 L6 15.8 L0.5 14 Z" fill="url(#fold)" stroke="#e3ae44" stroke-width="0.8"/><path d="M2 2 L2 13" stroke="#fffbe8" stroke-width="1"/><rect x="10.5" y="8.5" width="2.5" height="6" fill="#f1c15a"/><rect x="11.2" y="11" width="1.2" height="2.6" fill="#1aa3d9"/></g><path d="M154 176 L158.5 179.5 L154 183 Z" fill="#000"/><path d="M218 176 L222.5 179.5 L218 183 Z" fill="#000"/><path d="M316 176 L320.5 179.5 L316 183 Z" fill="#000"/><path d="M387 176 L391.5 179.5 L387 183 Z" fill="#000"/><path d="M636.5 177.5 L639.5 181.5 L642.5 177.5" fill="none" stroke="#6a6a6a" stroke-width="2"/><path d="M665.4 180.2 A4.4 4.4 0 1 1 661.2 175.8" fill="none" stroke="#777" stroke-width="1.7"/><path d="M661 172.8 L664.6 175.8 L661 178.6 Z" fill="#777"/><circle cx="874" cy="177.8" r="3.3" fill="none" stroke="#6d6d6d" stroke-width="1.6"/><path d="M871.5 180.5 L867.5 184.5" stroke="#6d6d6d" stroke-width="2"/><path d="M46.7 209 L49 214 L54.5 214.6 L50.4 218.3 L51.6 223.8 L46.7 221 L41.8 223.8 L43 218.3 L38.9 214.6 L44.4 214 Z" fill="#fbc43c" stroke="#f06a22" stroke-width="1"/><rect x="49.5" y="233.5" width="15" height="12" fill="#b0bcc8" stroke="#8a98a6" stroke-width="1"/><rect x="50.5" y="234.5" width="13" height="8" fill="url(#scr)"/><rect x="50.5" y="242.5" width="13" height="2.5" fill="#3a4a5a"/><g transform="translate(50,251) scale(1.0)"><path d="M5 1.5 L12.5 1.5 L12.5 14.5 L5 15.5 Z" fill="url(#foldb)" stroke="#e0a83a" stroke-width="0.8"/><path d="M0.5 0.5 L6 1.5 L6 15.8 L0.5 14 Z" fill="url(#fold)" stroke="#e3ae44" stroke-width="0.8"/><path d="M2 2 L2 13" stroke="#fffbe8" stroke-width="1"/></g><path d="M57.5 257 L61.5 257 L61.5 261 L64.5 261 L59.5 267 L54.5 261 L57.5 261 Z" fill="#1a9be0"/><rect x="55.5" y="274.5" width="8" height="9" fill="#fff" stroke="#9a9a9a" stroke-width="0.8"/><path d="M57 277 L62 277" stroke="#aab" stroke-width="0.8"/><rect x="58.5" y="278.5" width="3" height="2" fill="#3a8fd8"/><circle cx="52.2" cy="276.2" r="2.8" fill="#f4f4f4" stroke="#8a8a8a" stroke-width="0.9"/><path d="M52.2 274.6 L52.2 276.4 L53.6 276.4" fill="none" stroke="#444" stroke-width="0.7"/><path d="M51.5 287.7 L52.5 284 L64 284 L65 287.7 Z" fill="#a8a8a8"/><rect x="54" y="280.8" width="6.3" height="4.2" fill="#fff" stroke="#8aa" stroke-width="0.6"/><rect x="54.6" y="281.5" width="5" height="3" fill="#1aa0a0"/><rect x="43" y="315.3" width="12" height="10.5" rx="0.8" fill="#dcdcd4" stroke="#c4c4bc" stroke-width="0.8"/><rect x="44.3" y="317" width="9.2" height="7" fill="url(#netg)"/><path d="M47.5 326 L50.5 326 L52 328.5 L45.5 328.5 Z" fill="#b0b0b0"/><rect x="39.3" y="319.3" width="2.8" height="9.5" rx="0.8" fill="#d0d0d0" stroke="#9a9a9a" stroke-width="0.7"/><rect x="39.8" y="320.5" width="1.8" height="1.6" fill="#22dd22"/><g transform="translate(50,335) scale(0.9375)"><path d="M5 1.5 L12.5 1.5 L12.5 14.5 L5 15.5 Z" fill="url(#foldb)" stroke="#e0a83a" stroke-width="0.8"/><path d="M0.5 0.5 L6 1.5 L6 15.8 L0.5 14 Z" fill="url(#fold)" stroke="#e3ae44" stroke-width="0.8"/><path d="M2 2 L2 13" stroke="#fffbe8" stroke-width="1"/></g><rect x="56.5" y="342.5" width="9" height="7" fill="url(#scr)" stroke="#5a6a7a" stroke-width="0.6"/><g transform="translate(50,356) scale(0.9375)"><path d="M5 1.5 L12.5 1.5 L12.5 14.5 L5 15.5 Z" fill="url(#foldb)" stroke="#e0a83a" stroke-width="0.8"/><path d="M0.5 0.5 L6 1.5 L6 15.8 L0.5 14 Z" fill="url(#fold)" stroke="#e3ae44" stroke-width="0.8"/><path d="M2 2 L2 13" stroke="#fffbe8" stroke-width="1"/></g><rect x="57.5" y="359.5" width="7.5" height="11" fill="#fff" stroke="#8a8a8a" stroke-width="0.8"/><path d="M59 362 L63.5 362 M59 364 L63.5 364 M59 366 L63.5 366 M59 368 L63.5 368" stroke="#9aa" stroke-width="0.7"/><rect x="59" y="362" width="2.5" height="2.5" fill="#3a8fd0"/><g transform="translate(50,377) scale(0.9375)"><path d="M5 1.5 L12.5 1.5 L12.5 14.5 L5 15.5 Z" fill="url(#foldb)" stroke="#e0a83a" stroke-width="0.8"/><path d="M0.5 0.5 L6 1.5 L6 15.8 L0.5 14 Z" fill="url(#fold)" stroke="#e3ae44" stroke-width="0.8"/><path d="M2 2 L2 13" stroke="#fffbe8" stroke-width="1"/></g><path d="M57.5 383 L61.5 383 L61.5 387 L64.5 387 L59.5 392.5 L54.5 387 L57.5 387 Z" fill="#1a9be0"/><g transform="translate(50,398) scale(0.9375)"><path d="M5 1.5 L12.5 1.5 L12.5 14.5 L5 15.5 Z" fill="url(#foldb)" stroke="#e0a83a" stroke-width="0.8"/><path d="M0.5 0.5 L6 1.5 L6 15.8 L0.5 14 Z" fill="url(#fold)" stroke="#e3ae44" stroke-width="0.8"/><path d="M2 2 L2 13" stroke="#fffbe8" stroke-width="1"/></g><path d="M58.5 402 L58.5 410" stroke="#1a8fd8" stroke-width="1.5"/><ellipse cx="56.8" cy="410.5" rx="2.3" ry="2" fill="#1a8fd8"/><path d="M58.5 402 Q62 404 61 408" fill="none" stroke="#1a8fd8" stroke-width="1.3"/><g transform="translate(50,419) scale(0.9375)"><path d="M5 1.5 L12.5 1.5 L12.5 14.5 L5 15.5 Z" fill="url(#foldb)" stroke="#e0a83a" stroke-width="0.8"/><path d="M0.5 0.5 L6 1.5 L6 15.8 L0.5 14 Z" fill="url(#fold)" stroke="#e3ae44" stroke-width="0.8"/><path d="M2 2 L2 13" stroke="#fffbe8" stroke-width="1"/></g><rect x="56.5" y="424.5" width="9" height="8" fill="#fff" stroke="#8a8a8a" stroke-width="0.8"/><rect x="57.5" y="425.5" width="7" height="6" fill="#5fb7e6"/><path d="M57.5 431.5 L60 428.5 L64.5 431.5 Z" fill="#3a9a6a"/><g transform="translate(50,440) scale(0.9375)"><path d="M5 1.5 L12.5 1.5 L12.5 14.5 L5 15.5 Z" fill="url(#foldb)" stroke="#e0a83a" stroke-width="0.8"/><path d="M0.5 0.5 L6 1.5 L6 15.8 L0.5 14 Z" fill="url(#fold)" stroke="#e3ae44" stroke-width="0.8"/><path d="M2 2 L2 13" stroke="#fffbe8" stroke-width="1"/></g><rect x="56" y="444" width="9.5" height="11" fill="#333"/><rect x="58" y="445" width="5.5" height="4" fill="#4aa8d8"/><rect x="58" y="450" width="5.5" height="4" fill="#4aa8d8"/><rect x="50" y="461.5" width="3.4" height="3.8" fill="#0cc6f6"/><rect x="54.2" y="461" width="3.8" height="4.3" fill="#0cc6f6"/><rect x="50" y="466" width="3.4" height="3.6" fill="#0cc6f6"/><rect x="54.2" y="466" width="3.8" height="4" fill="#0cc6f6"/><rect x="49.5" y="470.5" width="15" height="6" rx="1.6" fill="#c8ccd0" stroke="#6a7078" stroke-width="1"/><rect x="51" y="472" width="10" height="3" fill="#157a92"/><rect x="61.5" y="472" width="1.5" height="3" fill="#22dd22"/><path d="M50 492 L52 489 L62 489 L64 492 Z" fill="#e8e8e8" stroke="#8a8a8a" stroke-width="0.8"/><rect x="49.5" y="492" width="15" height="5.5" rx="1" fill="#d0d0d0" stroke="#7a7a7a" stroke-width="0.8"/><rect x="60" y="493.5" width="2.5" height="2.2" fill="#2ec22e"/><path d="M50 513 L52 510 L62 510 L64 513 Z" fill="#e8e8e8" stroke="#8a8a8a" stroke-width="0.8"/><rect x="49.5" y="513" width="15" height="5.5" rx="1" fill="#d0d0d0" stroke="#7a7a7a" stroke-width="0.8"/><rect x="60" y="514.5" width="2.5" height="2.2" fill="#2ec22e"/><path d="M50 534 L52 531 L62 531 L64 534 Z" fill="#e8e8e8" stroke="#8a8a8a" stroke-width="0.8"/><rect x="49.5" y="534" width="15" height="5.5" rx="1" fill="#d0d0d0" stroke="#7a7a7a" stroke-width="0.8"/><rect x="60" y="535.5" width="2.5" height="2.2" fill="#2ec22e"/><path d="M50 555 L52 552 L62 552 L64 555 Z" fill="#e8e8e8" stroke="#8a8a8a" stroke-width="0.8"/><rect x="49.5" y="555" width="15" height="5.5" rx="1" fill="#d0d0d0" stroke="#7a7a7a" stroke-width="0.8"/><rect x="60" y="556.5" width="2.5" height="2.2" fill="#2ec22e"/><circle cx="44.3" cy="592.3" r="5.3" fill="#1a6ae0"/><circle cx="45" cy="591" r="3" fill="#2ab8f0" opacity="0.7"/><path d="M40 590 Q41.5 587.5 44 588 L43.5 590.5 Q42 591.5 40 590 Z" fill="#22dd22"/><path d="M41.5 594.5 Q44 593.5 45.5 595.5 L44.5 597.5 Q42 597 41.5 594.5 Z" fill="#22dd22"/><path d="M47 590 L49 589.5 L49 591 Z" fill="#22dd22"/><rect x="45.5" y="591.5" width="9.5" height="8.5" fill="#cfd6de" stroke="#b8c0c8" stroke-width="0.8"/><rect x="46.5" y="592.5" width="7.5" height="6.5" fill="url(#netg)"/><path d="M49.5 600 L49.5 603 M47.8 603.3 L51.5 603.3" stroke="#7a8a9a" stroke-width="1.2"/><path d="M199.5 224.0 L208.5 224.0 L211.5 227.0 L211.5 239.0 L199.5 239.0 Z" fill="#f8f8f8" stroke="#a4a4a4" stroke-width="1"/><path d="M208.5 224.0 L208.5 227.0 L211.5 227.0" fill="#e8e8e8" stroke="#a4a4a4" stroke-width="1"/><circle cx="204.2" cy="230.8" r="3.1" fill="#d4f1fb" stroke="#1d6aa6" stroke-width="1.1" stroke-dasharray="0.9 0.75"/><circle cx="207.5" cy="233.9" r="2.5" fill="#2a7ab6" stroke="#1d6aa6" stroke-width="0.9" stroke-dasharray="1 0.5"/><path d="M207.5 232.1 L207.5 235.7 M205.7 233.9 L209.3 233.9" stroke="#fff" stroke-width="0.8"/><circle cx="203.6" cy="231.1" r="0.8" fill="#111"/><rect x="197.5" y="245.5" width="15" height="12" fill="#fff" stroke="#80868c" stroke-width="1"/><rect x="198" y="246" width="14" height="1.8" fill="#dfe6ee"/><rect x="207" y="246" width="1" height="1.5" fill="#2a4a8a"/><rect x="209" y="246" width="1" height="1.5" fill="#2a4a8a"/><rect x="211" y="246" width="1" height="1.5" fill="#2a4a8a"/><rect x="199" y="249" width="5" height="6" fill="url(#exeg)"/><path d="M205 250.5 L209 250.5 M205 252.5 L209 252.5 M205 254.5 L209 254.5" stroke="#c0c4c8" stroke-width="1"/><rect x="210" y="249" width="1.2" height="4" fill="url(#exeg)"/><path d="M206.2 253.4 L209.5 252.4 L212.8 253.4 L212.8 256 Q212.8 258.8 209.5 260 Q206.2 258.8 206.2 256 Z" fill="#2a8ee0"/><path d="M209.5 252.4 L212.8 253.4 L212.8 256 L209.5 256 Z" fill="#f7c530"/><path d="M206.2 256 L209.5 256 L209.5 260 Q206.2 258.8 206.2 256 Z" fill="#f7c530"/><path d="M199.5 266.0 L208.5 266.0 L211.5 269.0 L211.5 281.0 L199.5 281.0 Z" fill="#f8f8f8" stroke="#a4a4a4" stroke-width="1"/><path d="M208.5 266.0 L208.5 269.0 L211.5 269.0" fill="#e8e8e8" stroke="#a4a4a4" stroke-width="1"/><circle cx="204.2" cy="272.8" r="3.1" fill="#d4f1fb" stroke="#1d6aa6" stroke-width="1.1" stroke-dasharray="0.9 0.75"/><circle cx="207.5" cy="275.9" r="2.5" fill="#2a7ab6" stroke="#1d6aa6" stroke-width="0.9" stroke-dasharray="1 0.5"/><path d="M207.5 274.1 L207.5 277.7 M205.7 275.9 L209.3 275.9" stroke="#fff" stroke-width="0.8"/><circle cx="203.6" cy="273.1" r="0.8" fill="#111"/><path d="M199.5 287.0 L208.5 287.0 L211.5 290.0 L211.5 302.0 L199.5 302.0 Z" fill="#f8f8f8" stroke="#a4a4a4" stroke-width="1"/><path d="M208.5 287.0 L208.5 290.0 L211.5 290.0" fill="#e8e8e8" stroke="#a4a4a4" stroke-width="1"/><circle cx="204.2" cy="293.8" r="3.1" fill="#d4f1fb" stroke="#1d6aa6" stroke-width="1.1" stroke-dasharray="0.9 0.75"/><circle cx="207.5" cy="296.9" r="2.5" fill="#2a7ab6" stroke="#1d6aa6" stroke-width="0.9" stroke-dasharray="1 0.5"/><path d="M207.5 295.1 L207.5 298.7 M205.7 296.9 L209.3 296.9" stroke="#fff" stroke-width="0.8"/><circle cx="203.6" cy="294.1" r="0.8" fill="#111"/><rect x="197.5" y="308.5" width="15" height="12" fill="#fff" stroke="#80868c" stroke-width="1"/><rect x="198" y="309" width="14" height="1.8" fill="#dfe6ee"/><rect x="207" y="309" width="1" height="1.5" fill="#2a4a8a"/><rect x="209" y="309" width="1" height="1.5" fill="#2a4a8a"/><rect x="211" y="309" width="1" height="1.5" fill="#2a4a8a"/><rect x="199" y="312" width="5" height="6" fill="url(#exeg)"/><path d="M205 313.5 L209 313.5 M205 315.5 L209 315.5 M205 317.5 L209 317.5" stroke="#c0c4c8" stroke-width="1"/><rect x="210" y="312" width="1.2" height="4" fill="url(#exeg)"/><path d="M199.5 329.0 L208.5 329.0 L211.5 332.0 L211.5 344.0 L199.5 344.0 Z" fill="#f8f8f8" stroke="#a4a4a4" stroke-width="1"/><path d="M208.5 329.0 L208.5 332.0 L211.5 332.0" fill="#e8e8e8" stroke="#a4a4a4" stroke-width="1"/><circle cx="204.2" cy="335.8" r="3.1" fill="#d4f1fb" stroke="#1d6aa6" stroke-width="1.1" stroke-dasharray="0.9 0.75"/><circle cx="207.5" cy="338.9" r="2.5" fill="#2a7ab6" stroke="#1d6aa6" stroke-width="0.9" stroke-dasharray="1 0.5"/><path d="M207.5 337.1 L207.5 340.7 M205.7 338.9 L209.3 338.9" stroke="#fff" stroke-width="0.8"/><circle cx="203.6" cy="336.1" r="0.8" fill="#111"/><path d="M199.5 350.0 L208.5 350.0 L211.5 353.0 L211.5 365.0 L199.5 365.0 Z" fill="#f8f8f8" stroke="#a4a4a4" stroke-width="1"/><path d="M208.5 350.0 L208.5 353.0 L211.5 353.0" fill="#e8e8e8" stroke="#a4a4a4" stroke-width="1"/><circle cx="204.2" cy="356.8" r="3.1" fill="#d4f1fb" stroke="#1d6aa6" stroke-width="1.1" stroke-dasharray="0.9 0.75"/><circle cx="207.5" cy="359.9" r="2.5" fill="#2a7ab6" stroke="#1d6aa6" stroke-width="0.9" stroke-dasharray="1 0.5"/><path d="M207.5 358.1 L207.5 361.7 M205.7 359.9 L209.3 359.9" stroke="#fff" stroke-width="0.8"/><circle cx="203.6" cy="357.1" r="0.8" fill="#111"/><rect x="197.5" y="371.5" width="15" height="12" fill="#fff" stroke="#80868c" stroke-width="1"/><rect x="198" y="372" width="14" height="1.8" fill="#dfe6ee"/><rect x="207" y="372" width="1" height="1.5" fill="#2a4a8a"/><rect x="209" y="372" width="1" height="1.5" fill="#2a4a8a"/><rect x="211" y="372" width="1" height="1.5" fill="#2a4a8a"/><rect x="199" y="375" width="5" height="6" fill="url(#exeg)"/><path d="M205 376.5 L209 376.5 M205 378.5 L209 378.5 M205 380.5 L209 380.5" stroke="#c0c4c8" stroke-width="1"/><rect x="210" y="375" width="1.2" height="4" fill="url(#exeg)"/><path d="M206.2 379.4 L209.5 378.4 L212.8 379.4 L212.8 382 Q212.8 384.8 209.5 386 Q206.2 384.8 206.2 382 Z" fill="#2a8ee0"/><path d="M209.5 378.4 L212.8 379.4 L212.8 382 L209.5 382 Z" fill="#f7c530"/><path d="M206.2 382 L209.5 382 L209.5 386 Q206.2 384.8 206.2 382 Z" fill="#f7c530"/><rect x="197.5" y="392.5" width="15" height="12" fill="#fff" stroke="#80868c" stroke-width="1"/><rect x="198" y="393" width="14" height="1.8" fill="#dfe6ee"/><rect x="207" y="393" width="1" height="1.5" fill="#2a4a8a"/><rect x="209" y="393" width="1" height="1.5" fill="#2a4a8a"/><rect x="211" y="393" width="1" height="1.5" fill="#2a4a8a"/><rect x="199" y="396" width="5" height="6" fill="url(#exeg)"/><path d="M205 397.5 L209 397.5 M205 399.5 L209 399.5 M205 401.5 L209 401.5" stroke="#c0c4c8" stroke-width="1"/><rect x="210" y="396" width="1.2" height="4" fill="url(#exeg)"/><rect x="197.5" y="413.5" width="15" height="12" fill="#fff" stroke="#80868c" stroke-width="1"/><rect x="198" y="414" width="14" height="1.8" fill="#dfe6ee"/><rect x="207" y="414" width="1" height="1.5" fill="#2a4a8a"/><rect x="209" y="414" width="1" height="1.5" fill="#2a4a8a"/><rect x="211" y="414" width="1" height="1.5" fill="#2a4a8a"/><rect x="199" y="417" width="5" height="6" fill="url(#exeg)"/><path d="M205 418.5 L209 418.5 M205 420.5 L209 420.5 M205 422.5 L209 422.5" stroke="#c0c4c8" stroke-width="1"/><rect x="210" y="417" width="1.2" height="4" fill="url(#exeg)"/><rect x="197.5" y="434.5" width="15" height="12" fill="#fff" stroke="#80868c" stroke-width="1"/><rect x="198" y="435" width="14" height="1.8" fill="#dfe6ee"/><rect x="207" y="435" width="1" height="1.5" fill="#2a4a8a"/><rect x="209" y="435" width="1" height="1.5" fill="#2a4a8a"/><rect x="211" y="435" width="1" height="1.5" fill="#2a4a8a"/><rect x="199" y="438" width="5" height="6" fill="url(#exeg)"/><path d="M205 439.5 L209 439.5 M205 441.5 L209 441.5 M205 443.5 L209 443.5" stroke="#c0c4c8" stroke-width="1"/><rect x="210" y="438" width="1.2" height="4" fill="url(#exeg)"/><path d="M199.5 455.0 L208.5 455.0 L211.5 458.0 L211.5 470.0 L199.5 470.0 Z" fill="#f8f8f8" stroke="#a4a4a4" stroke-width="1"/><path d="M208.5 455.0 L208.5 458.0 L211.5 458.0" fill="#e8e8e8" stroke="#a4a4a4" stroke-width="1"/><circle cx="204.2" cy="461.8" r="3.1" fill="#d4f1fb" stroke="#1d6aa6" stroke-width="1.1" stroke-dasharray="0.9 0.75"/><circle cx="207.5" cy="464.9" r="2.5" fill="#2a7ab6" stroke="#1d6aa6" stroke-width="0.9" stroke-dasharray="1 0.5"/><path d="M207.5 463.1 L207.5 466.7 M205.7 464.9 L209.3 464.9" stroke="#fff" stroke-width="0.8"/><circle cx="203.6" cy="462.1" r="0.8" fill="#111"/><path d="M199.5 476.0 L208.5 476.0 L211.5 479.0 L211.5 491.0 L199.5 491.0 Z" fill="#f8f8f8" stroke="#a4a4a4" stroke-width="1"/><path d="M208.5 476.0 L208.5 479.0 L211.5 479.0" fill="#e8e8e8" stroke="#a4a4a4" stroke-width="1"/><circle cx="204.2" cy="482.8" r="3.1" fill="#d4f1fb" stroke="#1d6aa6" stroke-width="1.1" stroke-dasharray="0.9 0.75"/><circle cx="207.5" cy="485.9" r="2.5" fill="#2a7ab6" stroke="#1d6aa6" stroke-width="0.9" stroke-dasharray="1 0.5"/><path d="M207.5 484.1 L207.5 487.7 M205.7 485.9 L209.3 485.9" stroke="#fff" stroke-width="0.8"/><circle cx="203.6" cy="483.1" r="0.8" fill="#111"/><path d="M199.5 497.0 L208.5 497.0 L211.5 500.0 L211.5 512.0 L199.5 512.0 Z" fill="#f8f8f8" stroke="#a4a4a4" stroke-width="1"/><path d="M208.5 497.0 L208.5 500.0 L211.5 500.0" fill="#e8e8e8" stroke="#a4a4a4" stroke-width="1"/><circle cx="204.2" cy="503.8" r="3.1" fill="#d4f1fb" stroke="#1d6aa6" stroke-width="1.1" stroke-dasharray="0.9 0.75"/><circle cx="207.5" cy="506.9" r="2.5" fill="#2a7ab6" stroke="#1d6aa6" stroke-width="0.9" stroke-dasharray="1 0.5"/><path d="M207.5 505.1 L207.5 508.7 M205.7 506.9 L209.3 506.9" stroke="#fff" stroke-width="0.8"/><circle cx="203.6" cy="504.1" r="0.8" fill="#111"/><path d="M199.5 518.0 L208.5 518.0 L211.5 521.0 L211.5 533.0 L199.5 533.0 Z" fill="#f8f8f8" stroke="#a4a4a4" stroke-width="1"/><path d="M208.5 518.0 L208.5 521.0 L211.5 521.0" fill="#e8e8e8" stroke="#a4a4a4" stroke-width="1"/><circle cx="204.2" cy="524.8" r="3.1" fill="#d4f1fb" stroke="#1d6aa6" stroke-width="1.1" stroke-dasharray="0.9 0.75"/><circle cx="207.5" cy="527.9" r="2.5" fill="#2a7ab6" stroke="#1d6aa6" stroke-width="0.9" stroke-dasharray="1 0.5"/><path d="M207.5 526.1 L207.5 529.7 M205.7 527.9 L209.3 527.9" stroke="#fff" stroke-width="0.8"/><circle cx="203.6" cy="525.1" r="0.8" fill="#111"/><rect x="197.5" y="539.5" width="15" height="12" fill="#fff" stroke="#80868c" stroke-width="1"/><rect x="198" y="540" width="14" height="1.8" fill="#dfe6ee"/><rect x="207" y="540" width="1" height="1.5" fill="#2a4a8a"/><rect x="209" y="540" width="1" height="1.5" fill="#2a4a8a"/><rect x="211" y="540" width="1" height="1.5" fill="#2a4a8a"/><rect x="199" y="543" width="5" height="6" fill="url(#exeg)"/><path d="M205 544.5 L209 544.5 M205 546.5 L209 546.5 M205 548.5 L209 548.5" stroke="#c0c4c8" stroke-width="1"/><rect x="210" y="543" width="1.2" height="4" fill="url(#exeg)"/><rect x="197.5" y="560.5" width="15" height="12" fill="#fff" stroke="#80868c" stroke-width="1"/><rect x="198" y="561" width="14" height="1.8" fill="#dfe6ee"/><rect x="207" y="561" width="1" height="1.5" fill="#2a4a8a"/><rect x="209" y="561" width="1" height="1.5" fill="#2a4a8a"/><rect x="211" y="561" width="1" height="1.5" fill="#2a4a8a"/><rect x="199" y="564" width="5" height="6" fill="url(#exeg)"/><path d="M205 565.5 L209 565.5 M205 567.5 L209 567.5 M205 569.5 L209 569.5" stroke="#c0c4c8" stroke-width="1"/><rect x="210" y="564" width="1.2" height="4" fill="url(#exeg)"/><path d="M199.5 581.0 L208.5 581.0 L211.5 584.0 L211.5 596.0 L199.5 596.0 Z" fill="#f8f8f8" stroke="#a4a4a4" stroke-width="1"/><path d="M208.5 581.0 L208.5 584.0 L211.5 584.0" fill="#e8e8e8" stroke="#a4a4a4" stroke-width="1"/><circle cx="204.2" cy="587.8" r="3.1" fill="#d4f1fb" stroke="#1d6aa6" stroke-width="1.1" stroke-dasharray="0.9 0.75"/><circle cx="207.5" cy="590.9" r="2.5" fill="#2a7ab6" stroke="#1d6aa6" stroke-width="0.9" stroke-dasharray="1 0.5"/><path d="M207.5 589.1 L207.5 592.7 M205.7 590.9 L209.3 590.9" stroke="#fff" stroke-width="0.8"/><circle cx="203.6" cy="588.1" r="0.8" fill="#111"/><g transform="translate(198,601.5) scale(1.0,1.0)"><path d="M4 2 L14.5 2 L14.5 14.5 L4 14.5 Z" fill="#fff" stroke="#b59a6a" stroke-width="1"/><path d="M3 1 L13.5 1 L13 12.5 L0.5 12.5 Z" fill="url(#pad)" stroke="#2aa7bd" stroke-width="0.6"/><path d="M2.5 4.5 L12.8 4.5 M2 6.5 L12.8 6.5 M1.6 8.5 L12.8 8.5 M1.2 10.5 L12.8 10.5" stroke="#d6f3f6" stroke-width="0.7"/><path d="M3.5 1 L4.5 0 L5.5 1 L6.5 0 L7.5 1 L8.5 0 L9.5 1 L10.5 0 L11.5 1 L12.5 0 L13.5 1" fill="none" stroke="#555" stroke-width="0.7"/></g><path d="M199.5 623.0 L208.5 623.0 L211.5 626.0 L211.5 638.0 L199.5 638.0 Z" fill="#f8f8f8" stroke="#a4a4a4" stroke-width="1"/><path d="M208.5 623.0 L208.5 626.0 L211.5 626.0" fill="#e8e8e8" stroke="#a4a4a4" stroke-width="1"/><circle cx="204.2" cy="629.8" r="3.1" fill="#d4f1fb" stroke="#1d6aa6" stroke-width="1.1" stroke-dasharray="0.9 0.75"/><circle cx="207.5" cy="632.9" r="2.5" fill="#2a7ab6" stroke="#1d6aa6" stroke-width="0.9" stroke-dasharray="1 0.5"/><path d="M207.5 631.1 L207.5 634.7 M205.7 632.9 L209.3 632.9" stroke="#fff" stroke-width="0.8"/><circle cx="203.6" cy="630.1" r="0.8" fill="#111"/><path d="M199.5 644.0 L208.5 644.0 L211.5 647.0 L211.5 659.0 L199.5 659.0 Z" fill="#f8f8f8" stroke="#a4a4a4" stroke-width="1"/><path d="M208.5 644.0 L208.5 647.0 L211.5 647.0" fill="#e8e8e8" stroke="#a4a4a4" stroke-width="1"/><circle cx="204.2" cy="650.8" r="3.1" fill="#d4f1fb" stroke="#1d6aa6" stroke-width="1.1" stroke-dasharray="0.9 0.75"/><circle cx="207.5" cy="653.9" r="2.5" fill="#2a7ab6" stroke="#1d6aa6" stroke-width="0.9" stroke-dasharray="1 0.5"/><path d="M207.5 652.1 L207.5 655.7 M205.7 653.9 L209.3 653.9" stroke="#fff" stroke-width="0.8"/><circle cx="203.6" cy="651.1" r="0.8" fill="#111"/><rect x="197" y="669" width="7" height="10" fill="#1586e0"/><rect x="205" y="669" width="7" height="10" fill="#1586e0"/><rect x="198" y="670.5" width="1.6" height="1" fill="#8fe0ff"/><rect x="201" y="670.5" width="1.6" height="1" fill="#8fe0ff"/><rect x="198" y="672.5" width="1" height="2" fill="#bff0ff"/><rect x="202" y="672.5" width="1" height="2" fill="#bff0ff"/><path d="M200.5 679 L200.5 676.5 L204 676.5" fill="none" stroke="#9fe8ff" stroke-width="0.8"/><path d="M208.5 679 L208.5 676.5 L212 676.5" fill="none" stroke="#9fe8ff" stroke-width="0.8"/><rect x="201" y="677" width="3" height="2" fill="#0a3fb0"/><rect x="209" y="677" width="3" height="2" fill="#0a3fb0"/><rect x="207" y="665" width="6" height="8" fill="url(#mscg)"/><rect x="208.5" y="667" width="3" height="1" fill="#fff6d8"/><path d="M199.5 686.0 L208.5 686.0 L211.5 689.0 L211.5 701.0 L199.5 701.0 Z" fill="#f8f8f8" stroke="#a4a4a4" stroke-width="1"/><path d="M208.5 686.0 L208.5 689.0 L211.5 689.0" fill="#e8e8e8" stroke="#a4a4a4" stroke-width="1"/><circle cx="204.2" cy="692.8" r="3.1" fill="#d4f1fb" stroke="#1d6aa6" stroke-width="1.1" stroke-dasharray="0.9 0.75"/><circle cx="207.5" cy="695.9" r="2.5" fill="#2a7ab6" stroke="#1d6aa6" stroke-width="0.9" stroke-dasharray="1 0.5"/><path d="M207.5 694.1 L207.5 697.7 M205.7 695.9 L209.3 695.9" stroke="#fff" stroke-width="0.8"/><circle cx="203.6" cy="693.1" r="0.8" fill="#111"/><path d="M887.2 209.5 L890.5 206 L893.8 209.5" fill="none" stroke="#606060" stroke-width="1.6"/><path d="M887.2 694 L890.5 697.5 L893.8 694" fill="none" stroke="#606060" stroke-width="1.6"/><rect x="855.5" y="710.5" width="3.6" height="3.6" fill="#fff" stroke="#9aa6b0" stroke-width="0.7"/><rect x="856.8" y="711.8" width="1.1" height="1.1" fill="#2a9a3a"/><path d="M861 712.3 L865 712.3 M866 712.3 L870 712.3" stroke="#505860" stroke-width="1.3"/><rect x="855.5" y="714.5" width="3.6" height="3.6" fill="#fff" stroke="#9aa6b0" stroke-width="0.7"/><rect x="856.8" y="715.8" width="1.1" height="1.1" fill="#e02020"/><path d="M861 716.3 L865 716.3 M866 716.3 L870 716.3" stroke="#505860" stroke-width="1.3"/><rect x="855.5" y="718.5" width="3.6" height="3.6" fill="#fff" stroke="#9aa6b0" stroke-width="0.7"/><rect x="856.8" y="719.8" width="1.1" height="1.1" fill="#1a6ad8"/><path d="M861 720.3 L865 720.3 M866 720.3 L870 720.3" stroke="#505860" stroke-width="1.3"/><rect x="877.5" y="710.5" width="13" height="11" rx="1" fill="#fff" stroke="#8a9aac" stroke-width="1"/><rect x="879" y="712" width="10" height="8" fill="#1a8ae0"/><path d="M880 714.5 Q884 712.5 888.5 715 L888.5 716 Q884 714.5 880 716 Z" fill="#d8f0ff"/><path d="M879 720 L879 716.5 Q882 715 885 717.5 Q887 719 889 718.5 L889 720 Z" fill="#1f7a4a"/></svg>
<div style="left:51px;top:49px;width:210px;height:63px;border:1px solid #767676;border-radius:2px;box-sizing:border-box;background:linear-gradient(#ffffff,#e4ecf7);box-shadow:1px 1px 2px rgba(0,0,0,0.15);"></div>
<div class="t" style="left:57.5px;top:58.27px;font-size:11.5px;line-height:11.5px;color:#3a3a3a;font-weight:700;transform-origin:left center;transform:scaleX(0.946);">Properties (Alt+Enter)</div>
<div class="t" style="left:65.4px;top:81.27px;font-size:11.5px;line-height:11.5px;color:#484848;font-weight:400;transform-origin:left center;transform:scaleX(1.030);">Show the properties for the</div>
<div class="t" style="left:65.4px;top:93.77px;font-size:11.5px;line-height:11.5px;color:#484848;font-weight:400;transform-origin:left center;">selected item.</div>
</div></body></html>
